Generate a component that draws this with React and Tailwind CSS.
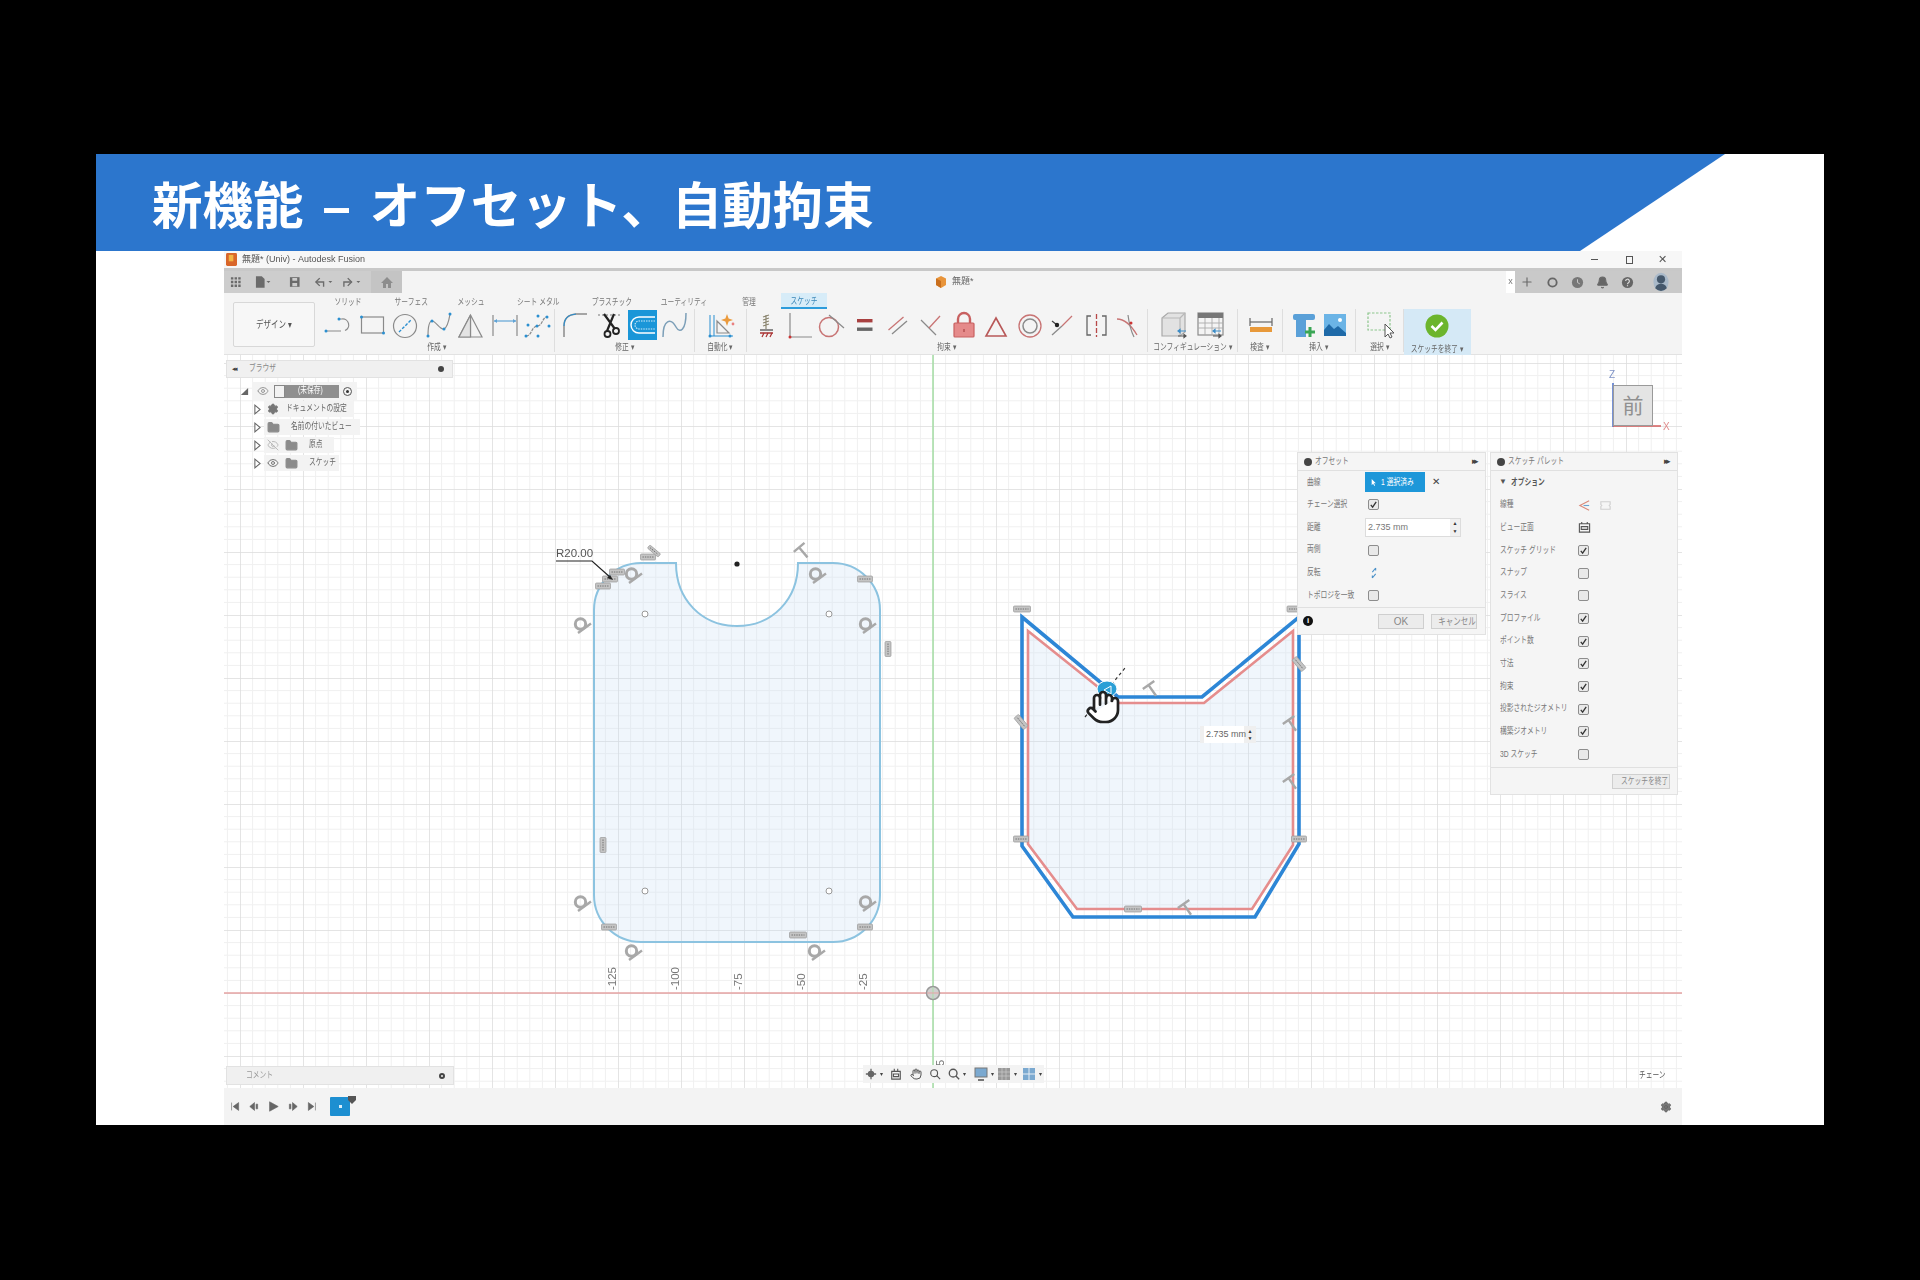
import React from 'react';
import { Hand, Plus, Bell, Settings, Eye, EyeOff, Folder } from 'lucide-react';

const BL = '#2b8fd0';
const GR = '#8a8a8a';
const RD = '#c87474';

function Txt({ children, className = '', origin = 'origin-left' }) {
  return <span className={`inline-block whitespace-nowrap scale-x-75 ${origin} ${className}`}>{children}</span>;
}

function Ico({ children }) {
  return <svg viewBox="0 0 33 32" fill="none" strokeWidth="1.2" className="w-[33px] h-8 shrink-0">{children}</svg>;
}

const Dot = ({ x, y, r = 1.5, c = BL }) => <circle cx={x} cy={y} r={r} fill={c} />;

const createIcons = [
  <Ico key="a"><path d="M4 22H19M17 10h3a6 6 0 0 1 3 11.5" stroke={GR} /><Dot x={4} y={22} /><Dot x={17} y={10} /></Ico>,
  <Ico key="b"><rect x="6.5" y="8" width="22" height="16" stroke={GR} /><Dot x={6.5} y={8} /><Dot x={28.5} y={24} /></Ico>,
  <Ico key="c"><circle cx="17" cy="17" r="11.5" stroke={GR} /><path d="M11 23 23 11" stroke={BL} strokeDasharray="3 1.5" strokeWidth="1.4" /></Ico>,
  <Ico key="d"><path d="M7 27C7 18 8 12 11 12c4 0 8 9 12 8 4-2 5-9 6-15" stroke={GR} /><Dot x={7} y={27} /><Dot x={11} y={12} /><Dot x={23} y={20} /><Dot x={29} y={5} /></Ico>,
  <Ico key="e"><path d="M16.5 6 5 28h23ZM16.5 6v22" stroke={GR} /><path d="M16.5 6 5 28h11.5Z" fill="#e3e3e3" stroke={GR} /></Ico>,
  <Ico key="f"><path d="M6 6v21M30 6v21" stroke={GR} /><path d="M7 12h22" stroke="#5fa3d6" /><path d="M7 12l3-2v4ZM29 12l-3-2v4Z" fill="#5fa3d6" /></Ico>,
  <Ico key="g"><path d="M6 27c6 0 5-9 11-10 6 0 5-9 10-9" stroke={GR} strokeDasharray="3 1" /><Dot x={6} y={27} /><Dot x={27} y={8} /><Dot x={8} y={16} /><Dot x={18} y={7} /><Dot x={29} y={17} /><Dot x={18} y={27} /><Dot x={17} y={17} /></Ico>,
];

const modifyIcons = [
  <Ico key="a"><path d="M5 28V17Q5 6 17 5h11" stroke={GR} strokeWidth="1.5" /><path d="M5 17Q5 6 17 5" stroke={BL} strokeWidth="1.1" /></Ico>,
  <Ico key="b"><path d="M6 6h22" stroke="#777" strokeDasharray="2 2" /><path d="M12 5 23 20M22 5 15 22" stroke="#222" strokeWidth="2.2" /><circle cx="15.5" cy="25" r="3" stroke="#222" strokeWidth="1.8" /><circle cx="24" cy="22" r="3" stroke="#222" strokeWidth="1.8" /></Ico>,
  <Ico key="c"><rect x="3" y="1" width="29" height="30" fill="#1a96d8" /><path d="M30 8H14a8 8 0 0 0 0 16h16" stroke="#fff" strokeWidth="1.4" /><path d="M30 12H14a4 4 0 0 0 0 8h16" stroke="#cfe9f8" strokeDasharray="1.5 1" /></Ico>,
  <Ico key="d"><path d="M5 28C5 10 13 9 18 18c4 7 10 3 10-14" stroke="#7c9fb8" strokeWidth="1.5" /></Ico>,
];

const autoIcon = (
  <Ico key="a">
    <path d="M6 6v21M10 6v21M6 27h23" stroke={BL} strokeWidth="1" />
    <path d="M13 24V12l12 12Z" stroke={GR} />
    <Dot x={6} y={27} /><Dot x={26} y={27} />
    <path d="M23 5l1.6 4.4L29 11l-4.4 1.6L23 17l-1.6-4.4L17 11l4.4-1.6Z" fill="#eb9a3c" />
    <Dot x={29} y={15} r={1.4} c="#e98080" />
  </Ico>
);

const constraintIcons = [
  <Ico key="a"><path d="M17 6v14M14 8l6-2M14 11l6-2M14 14l6-2M14 17l6-2" stroke="#8b8670" /><path d="M11 21h13" stroke="#666" strokeWidth="1.5" /><path d="M11 24h13" stroke="#a33" strokeWidth="1.5" /><path d="M13 28l2-4M17 28l2-4M21 28l2-4" stroke="#a33" /></Ico>,
  <Ico key="b"><path d="M8 4v24h22" stroke={GR} /><Dot x={8} y={28} c="#c33" /></Ico>,
  <Ico key="c"><circle cx="14" cy="18" r="9.5" stroke={RD} strokeWidth="1.5" /><path d="M14 6l15 13" stroke={GR} /></Ico>,
  <Ico key="d"><rect x="9" y="10" width="15.5" height="3.4" fill="#a84040" /><rect x="9" y="18.5" width="15.5" height="3.4" fill="#666" /></Ico>,
  <Ico key="e"><path d="M7.5 21 22.5 8" stroke={RD} strokeWidth="1.3" /><path d="M11 25 26 12" stroke={GR} strokeWidth="1.3" /></Ico>,
  <Ico key="f"><path d="M7 11l15 15" stroke={GR} strokeWidth="1.3" /><path d="M15 19 26 7" stroke={RD} strokeWidth="1.3" /></Ico>,
  <Ico key="g"><path d="M11 14V10a6 6 0 0 1 12 0v4" stroke="#c86060" strokeWidth="2.4" /><rect x="7" y="14" width="20" height="14" rx="1" fill="#e58a8a" stroke="#c86060" /><rect x="16.4" y="20" width="1.2" height="3" fill="#a44" /></Ico>,
  <Ico key="h"><path d="M16 9 26 27H6Z" stroke="#b85858" strokeWidth="1.6" /></Ico>,
  <Ico key="i"><circle cx="17" cy="17" r="11" stroke={RD} strokeWidth="1.3" /><circle cx="17" cy="17" r="7" stroke={GR} strokeWidth="1.5" /></Ico>,
  <Ico key="j"><path d="M6 26 16 17" stroke={GR} strokeWidth="1.3" /><path d="M16 17 26 7" stroke={RD} strokeWidth="1.3" /><path d="M6 12l5 4" stroke="#444" /><Dot x={11} y={16} r={2.2} c="#222" /></Ico>,
  <Ico key="k"><path d="M12 7H8v19h4M23 7h4v19h-4" stroke="#666" strokeWidth="1.3" /><path d="M17.5 5v23" stroke="#b84848" strokeWidth="1.3" strokeDasharray="5 2" /></Ico>,
  <Ico key="l"><path d="M5 10c8 0 14 6 20 16" stroke={RD} strokeWidth="1.3" /><path d="M16 6c1 8 3 16 6 22" stroke={GR} /><Dot x={19} y={14} c="#c33" /></Ico>,
];

const arrows = (
  <>
    <path d="M19 22h8M19 22l2-1.6v3.2Z" stroke="#3b8cc7" />
    <path d="M19 27h8M27 27l-2-1.6v3.2Z" stroke="#555" />
  </>
);

const Box = (
  <Ico key="a">
    <path d="M3 9l6-5h17v19l-5 4H3Z" fill="#e2e2e2" stroke="#a8a8a8" />
    <path d="M3 9h18v18M21 9l5-5" stroke="#b8b8b8" />
    {arrows}
  </Ico>
);
const Table = (
  <Ico key="b">
    <rect x="4" y="4" width="25" height="22" fill="#f4f4f4" stroke="#8a8a8a" />
    <rect x="4" y="4" width="25" height="5" fill="#777" />
    <path d="M4 14h25M4 19h25M11 9v17M18 9v17M25 9v17" stroke="#aaa" strokeWidth=".9" />
    {arrows}
  </Ico>
);
const Ruler = (
  <Ico key="a">
    <path d="M6 9v8M28 9v8" stroke="#666" /><path d="M6 13h22" stroke="#666" />
    <rect x="6" y="18" width="22" height="5" fill="#e8993a" />
  </Ico>
);
const Bolt = (
  <Ico key="a">
    <rect x="7" y="5" width="22" height="6" rx="2" fill="#5aa0d8" />
    <rect x="10" y="11" width="10" height="17" fill="#5aa0d8" />
    <path d="M24 18v10M19 23h10" stroke="#3aa655" strokeWidth="3" />
  </Ico>
);
const Img = (
  <Ico key="b">
    <rect x="5" y="5" width="22" height="22" fill="#6bb4e6" />
    <circle cx="21" cy="11" r="2" fill="#fff" />
    <path d="M5 27v-6l5-6 5 5 4-3 8 7v3Z" fill="#1f6aa8" />
  </Ico>
);
const Sel = (
  <Ico key="a">
    <rect x="5" y="4" width="22" height="17" stroke="#8cc58c" strokeDasharray="2.5 1.5" />
    <path d="M22 15v13l3-3 2 4 2-1-2-4h4Z" fill="#fff" stroke="#555" strokeWidth="1" />
  </Ico>
);
const Finish = (
  <Ico key="a">
    <circle cx="16" cy="17" r="11.5" fill="#6cb52d" />
    <path d="M10.5 17l4 4 7-7.5" stroke="#fff" strokeWidth="2.6" />
  </Ico>
);

function Group({ w, label, icons, active, gap = '' }) {
  return (
    <div className={`flex flex-col items-center ${w} ${active ? 'bg-[#d5e9f6]' : 'border-r border-[#dedede] mb-[3px]'}`}>
      <div className={`flex h-8 justify-center ${gap}`}>{icons}</div>
      <div className="h-[14px] pt-[2px] flex items-center justify-center text-[9px] leading-none text-[#666]">
        <Txt origin="origin-center">{label} ▾</Txt>
      </div>
    </div>
  );
}

const tabs = [
  ['ソリッド', 'w-[56px]'],
  ['サーフェス', 'w-[70px]'],
  ['メッシュ', 'w-[50px]'],
  ['シート メタル', 'w-[84px]'],
  ['プラスチック', 'w-[64px]'],
  ['ユーティリティ', 'w-[80px]'],
  ['管理', 'w-[50px]'],
];

function Ribbon() {
  return (
    <div className="h-[62px] bg-[#f4f4f4] flex border-b border-[#e2e2e2]">
      <div className="w-[96px] pl-[9px] pt-[9px]">
        <div className="w-[82px] h-[45px] border border-[#d8d8d8] rounded-[2px] bg-[#f7f7f7] flex items-center justify-center text-[10px] text-[#555]">
          <Txt origin="origin-center">デザイン ▾</Txt>
        </div>
      </div>
      <div className="flex flex-col">
        <div className="h-4 flex items-center text-[9px] text-[#777]">
          {tabs.map(([t, w]) => (
            <div key={t} className={`${w} text-center pt-[3px]`}><Txt origin="origin-center">{t}</Txt></div>
          ))}
          <div className="ml-[7px] w-[46px] h-4 pt-[2px] leading-[12px] bg-[#d7ecf8] border-b-2 border-[#2d9cdb] text-center text-[#3a87b8]"><Txt origin="origin-center">スケッチ</Txt></div>
        </div>
        <div className="flex h-[46px]">
          <Group w="w-[235px]" label="作成" icons={createIcons} />
          <Group w="w-[140px]" label="修正" icons={modifyIcons} />
          <Group w="w-[52px]" label="自動化" icons={autoIcon} />
          <Group w="w-[401px]" label="拘束" icons={constraintIcons} />
          <Group w="w-[90px]" label="コンフィギュレーション" icons={[Box, Table]} gap="gap-[2px]" />
          <Group w="w-[45px]" label="検査" icons={Ruler} />
          <Group w="w-[73px]" label="挿入" icons={[Bolt, Img]} />
          <Group w="w-[48px]" label="選択" icons={Sel} />
          <Group w="w-[67px]" label="スケッチを終了" icons={Finish} active />
        </div>
      </div>
    </div>
  );
}

function SmallSvg({ w = 14, children }) {
  return <svg viewBox={`0 0 ${w} 14`} width={w} height="14" fill="#6b6b6b">{children}</svg>;
}

function TitleBars() {
  return (
    <>
      <div className="h-[17px] bg-[#f7f7f7] flex items-center text-[9px] text-[#555]">
        <svg viewBox="0 0 12 14" className="w-[11px] h-[13px] ml-[2px]"><rect width="12" height="14" rx="1.5" fill="#d9662a" /><path d="M3 2h5v7H3Z" fill="#f2b544" /></svg>
        <span className="ml-[5px] whitespace-nowrap">無題* (Univ) - Autodesk Fusion</span>
        <div className="ml-auto flex items-center text-[#555]">
          <span className="w-[7px] h-px bg-[#555]" />
          <span className="ml-[28px] w-[7px] h-[8px] border border-[#555]" />
          <span className="ml-[25px] mr-[15px] text-[11px] leading-none">✕</span>
        </div>
      </div>
      <div className="h-[3px] bg-[#c8c8c8]" />
      <div className="h-[22px] bg-[#f4f4f4] flex items-center relative">
        <div className="w-[178px] h-full bg-[#cdcdcd] flex items-center pl-[5px] gap-[5px]">
          <SmallSvg><path d="M2 2h2.5v2.5H2ZM5.8 2h2.5v2.5H5.8ZM9.6 2h2.5v2.5H9.6ZM2 5.8h2.5v2.5H2ZM5.8 5.8h2.5v2.5H5.8ZM9.6 5.8h2.5v2.5H9.6ZM2 9.6h2.5v2.5H2ZM5.8 9.6h2.5v2.5H5.8ZM9.6 9.6h2.5v2.5H9.6Z" /></SmallSvg>
          <span className="w-[2px]" />
          <SmallSvg w={18}><path d="M2 1h6l3 3v9H2Z" /><path d="M13 6h4l-2 2Z" /></SmallSvg>
          <span className="w-[6px]" />
          <SmallSvg><path d="M2 2h10v10H2Z" /><path d="M4.5 2.8h5v3h-5ZM4.5 8h5v3.4h-5Z" fill="#cdcdcd" /></SmallSvg>
          <span className="w-[2px]" />
          <SmallSvg w={24}><path d="M7 3 3 7l4 4" fill="none" stroke="#6b6b6b" strokeWidth="1.4" /><path d="M3 7h8v5" fill="none" stroke="#6b6b6b" strokeWidth="1.4" /><path d="M16 6h4l-2 2Z" /></SmallSvg>
          <SmallSvg w={24}><path d="M7 3l4 4-4 4" fill="none" stroke="#6b6b6b" strokeWidth="1.4" /><path d="M11 7H3v5" fill="none" stroke="#6b6b6b" strokeWidth="1.4" /><path d="M16 6h4l-2 2Z" /></SmallSvg>
          <div className="h-full w-8 ml-[2px] bg-[#c4c4c4] flex items-center justify-center">
            <svg viewBox="0 0 14 14" width="14" height="14" fill="#8d8d8d"><path d="M7 2 1 8h2v5h3V9h2v4h3V8h2Z" /></svg>
          </div>
        </div>
        <div className="ml-[533px] flex items-center gap-[5px] text-[9px] text-[#666]">
          <svg viewBox="0 0 12 12" width="12" height="12"><path d="M6 0l5 2.5V9L6 12 1 9V2.5Z" fill="#e8943a" /><path d="M6 5v7L1 9V2.5Z" fill="#c96f1e" /></svg>
          <span>無題*</span>
        </div>
        <div className="ml-auto flex h-full items-center">
          <div className="w-[9px] h-full bg-white text-[9px] text-[#777] flex items-center justify-center">x</div>
          <div className="w-[167px] h-full bg-[#c9c9c9] flex items-center text-[#6b6b6b]">
            <Plus className="w-[14px] h-[14px] ml-[5px]" strokeWidth={2} />
            <svg viewBox="0 0 14 14" className="w-[13px] h-[13px] ml-[12px]" fill="none" stroke="#666" strokeWidth="2"><circle cx="7" cy="7" r="4.5" /></svg>
            <svg viewBox="0 0 14 14" className="w-[13px] h-[13px] ml-[12px]"><circle cx="7" cy="7" r="6" fill="#777" /><path d="M7 3.5V7l2.5 1.5" stroke="#ccc" fill="none" /></svg>
            <Bell className="w-[13px] h-[13px] ml-[12px]" fill="#666" />
            <svg viewBox="0 0 14 14" className="w-[13px] h-[13px] ml-[12px]"><circle cx="7" cy="7" r="6" fill="#666" /><path d="M5 5.5a2 2 0 1 1 3 1.7c-.8.5-1 .8-1 1.6M7 10v1" stroke="#ddd" fill="none" strokeWidth="1.3" /></svg>
            <svg viewBox="0 0 18 22" className="w-[16px] h-[20px] ml-[19px]"><ellipse cx="9" cy="11" rx="8.5" ry="10.5" fill="#a9b9c9" /><circle cx="9" cy="8" r="4.6" fill="#45586c" /><path d="M2.5 18c1-4 4-5 6.5-5s5.5 1 6.5 5q-3 3-6.5 3t-6.5-3Z" fill="#45586c" /></svg>
          </div>
        </div>
      </div>
    </>
  );
}

function Tangent({ x, y }) {
  return (
    <g transform={`translate(${x} ${y})`} fill="none" stroke="#a8a8a8">
      <circle cx="-1.5" cy="-1" r="5.2" strokeWidth="3" />
      <path d="M-4 8 9 -1.5" strokeWidth="2.4" />
    </g>
  );
}

function Bar({ x, y, rot = 0, w = 15, h = 6 }) {
  return (
    <g transform={`translate(${x} ${y}) rotate(${rot})`}>
      <rect x={-w / 2} y={-h / 2} width={w} height={h} rx="1" fill="#c4c4c4" stroke="#9a9a9a" strokeWidth=".7" />
      <path d={`M${-w / 2 + 2} 0H${w / 2 - 2}`} stroke="#666" strokeWidth=".9" strokeDasharray="1.4 1" />
    </g>
  );
}

function Tee({ x, y, rot = -35 }) {
  return (
    <g transform={`translate(${x} ${y}) rotate(${rot})`} stroke="#a8a8a8" strokeWidth="2.4" fill="none">
      <path d="M-7 -6H7M0 -6V7" />
    </g>
  );
}

function Drawing() {
  const axis = [
    ['-125', 612, 990], ['-100', 675, 990], ['-75', 738, 990], ['-50', 801, 990], ['-25', 863, 990],
  ];
  return (
    <svg viewBox="224 355 1458 733" className="absolute inset-0 w-full h-full" fill="none">
      <defs>
        <pattern id="grid" patternUnits="userSpaceOnUse" x="933" y="993" width="63" height="63">
          <path d="M12.6 0V63M25.2 0V63M37.8 0V63M50.4 0V63M0 12.6H63M0 25.2H63M0 37.8H63M0 50.4H63" stroke="#f0f0f0" strokeWidth="1" />
          <path d="M0 0V63M0 0H63" stroke="#dcdcdc" strokeWidth="1.5" />
        </pattern>
      </defs>
      <rect x="224" y="355" width="1458" height="733" fill="url(#grid)" />
      <path d="M224 993H1682" stroke="#e6a3a3" strokeWidth="1.6" />
      <path d="M933 355V1088" stroke="#a9dfa9" strokeWidth="1.6" />
      <circle cx="933" cy="993" r="6.5" fill="#d0d0d0" stroke="#999" strokeWidth="1.5" />
      <path d="M933 987v12" stroke="#a9dfa9" /><path d="M927 993h12" stroke="#e6a3a3" />

      {/* left sketch */}
      <path
        d="M594 610A47 47 0 0 1 641 563H676C676 600 702 626 737 626C772 626 798 600 798 563H833A47 47 0 0 1 880 610V895A47 47 0 0 1 833 942H641A47 47 0 0 1 594 895Z"
        fill="#c9dff3" fillOpacity=".28" stroke="#8cc3e0" strokeWidth="2"
      />
      {[[645, 614], [829, 614], [645, 891], [829, 891]].map(([x, y]) => (
        <circle key={`${x}-${y}`} cx={x} cy={y} r="3" fill="#fff" stroke="#999" strokeWidth="1" />
      ))}
      <circle cx="737" cy="564" r="2.6" fill="#222" />
      {[[582, 625], [633, 575], [817, 575], [867, 625], [582, 903], [633, 952], [816, 952], [867, 903]].map(([x, y]) => (
        <Tangent key={`${x}-${y}`} x={x} y={y} />
      ))}
      <Bar x={617} y={572} /><Bar x={610} y={579} /><Bar x={603} y={586} /><Bar x={865} y={579} />
      <Bar x={648} y={557} /><Bar x={654} y={551} rot={40} w={14} h={4} />
      <Tee x={803} y={552} rot={-40} />
      <Bar x={888} y={649} rot={90} /><Bar x={603} y={845} rot={90} />
      <Bar x={609} y={927} /><Bar x={798} y={935} w={17} /><Bar x={865} y={927} />
      <path d="M556 561H592L611 578" stroke="#222" strokeWidth="1.2" />
      <path d="M613 580l-6-2 3-3Z" fill="#222" />
      <text x="556" y="557" fontSize="11.5" fill="#555" fontFamily="Liberation Sans">R20.00</text>
      {axis.map(([t, x, y]) => (
        <text key={t} transform={`translate(${x + 4} ${y}) rotate(-90)`} fontSize="11.5" fill="#777" fontFamily="Liberation Sans">{t}</text>
      ))}
      <text transform="translate(944 1066) rotate(-90)" fontSize="11" fill="#777" fontFamily="Liberation Sans">5</text>

      {/* right sketch */}
      <path d="M1028 631 1118 703H1204L1293 631V845L1252 909H1077L1028 844Z" fill="#c9dff3" fillOpacity=".28" stroke="#e58d8d" strokeWidth="2.6" />
      <path d="M1022 617 1118 697H1202L1299 617V844L1255 917H1073L1022 846Z" stroke="#2d86d6" strokeWidth="3.6" />
      <Bar x={1022} y={609} w={17} /><Bar x={1293} y={609} w={12} />
      <Bar x={1021} y={722} rot={50} /><Bar x={1299} y={664} rot={50} />
      <Tee x={1152} y={690} /><Tee x={1292} y={725} /><Tee x={1292} y={783} /><Tee x={1187} y={909} />
      <Bar x={1021} y={839} /><Bar x={1299} y={839} /><Bar x={1133} y={909} w={17} />
      <path d="M1085 717 1125 668" stroke="#333" strokeWidth="1.2" strokeDasharray="3 3" />
      <ellipse cx="1107" cy="689" rx="10" ry="8" fill="#2b9fd6" stroke="#fff" />
      <path d="M1104 690 1111 686V694Z" stroke="#fff" />
      <Hand x={1085} y={689} width={36} height={36} fill="#fff" stroke="#222" strokeWidth={1.8} />

      {/* view cube */}
      <path d="M1613 383V427" stroke="#5577cc" strokeWidth="1.6" />
      <path d="M1613 426H1661" stroke="#d45c5c" strokeWidth="1.6" />
      <text x="1609" y="378" fontSize="10" fill="#7f93c6" fontFamily="Liberation Sans">Z</text>
      <text x="1663" y="430" fontSize="10" fill="#e08c8c" fontFamily="Liberation Sans">X</text>
    </svg>
  );
}

function Check({ on }) {
  return (
    <span className="w-[11px] h-[11px] rounded-[2px] border border-[#8d8d8d] bg-[#e9e9e9] flex items-center justify-center shrink-0">
      {on && <svg viewBox="0 0 10 10" className="w-[9px] h-[9px]" fill="none" stroke="#333" strokeWidth="1.4"><path d="M2 5.5 4 8l4-6" /></svg>}
    </span>
  );
}

function PanelHead({ title }) {
  return (
    <div className="h-[18px] flex items-center border-b border-[#e0e0e0] text-[9px] text-[#777] px-[6px]">
      <span className="w-2 h-2 rounded-full bg-[#444] mr-[3px]" />
      <Txt>{title}</Txt>
      <span className="ml-auto text-[9px] text-[#444] tracking-[-3px] pr-[3px]">▸▸</span>
    </div>
  );
}

function OffsetRow({ label, children }) {
  return (
    <div className="h-[22.6px] flex items-center pl-[9px]">
      <div className="w-[58px] text-[9px] text-[#777]"><Txt>{label}</Txt></div>
      {children}
    </div>
  );
}

function OffsetPanel() {
  return (
    <div className="absolute left-[1073px] top-[97px] w-[189px] h-[183px] bg-[#f5f5f5] border border-[#e2e2e2] flex flex-col">
      <PanelHead title="オフセット" />
      <div>
        <OffsetRow label="曲線">
          <div className="w-[60px] h-5 bg-[#1d97d9] flex items-center pl-[6px] gap-[5px] text-[9px] text-white">
            <svg viewBox="0 0 8 10" className="w-[7px] h-[9px]"><path d="M1 0v9l2-2 2 3 1-1-2-3h3Z" fill="#fff" /></svg>
            <Txt>1 選択済み</Txt>
          </div>
          <span className="ml-[7px] text-[10px] leading-none text-[#444]">✕</span>
        </OffsetRow>
        <OffsetRow label="チェーン選択"><span className="ml-[3px]"><Check on /></span></OffsetRow>
        <OffsetRow label="距離">
          <div className="w-[96px] h-[19px] bg-white border border-[#dcdcdc] flex items-center text-[9px] text-[#777]">
            <span className="pl-[2px] flex-1">2.735 mm</span>
            <span className="w-[10px] h-full bg-[#f0f0f0] text-[5px] leading-[8px] text-[#333] text-center flex flex-col justify-center"><span>▲</span><span>▼</span></span>
          </div>
        </OffsetRow>
        <OffsetRow label="両側"><span className="ml-[3px]"><Check /></span></OffsetRow>
        <OffsetRow label="反転">
          <svg viewBox="0 0 12 14" className="ml-[4px] w-[10px] h-3" fill="none" stroke="#4a90c8" strokeWidth="1.3"><path d="M8 1 4 6M8 8l-4 5M8 1v3M4 13v-3" /></svg>
        </OffsetRow>
        <OffsetRow label="トポロジを一致"><span className="ml-[3px]"><Check /></span></OffsetRow>
      </div>
      <div className="mt-auto h-[27px] border-t border-[#e0e0e0] flex items-center pl-[5px] pr-[8px] text-[10px] text-[#888]">
        <span className="w-[10px] h-[10px] rounded-full bg-[#111] text-white text-[8px] leading-[10px] text-center font-bold">i</span>
        <div className="ml-auto w-[46px] h-[15px] border border-[#cfcfcf] bg-[#ececec] text-center leading-[13px]">OK</div>
        <div className="ml-[7px] w-[46px] h-[15px] border border-[#cfcfcf] bg-[#ececec] text-center leading-[13px]"><Txt origin="origin-center">キャンセル</Txt></div>
      </div>
    </div>
  );
}

const paletteRows = [
  ['スケッチ グリッド', true],
  ['スナップ', false],
  ['スライス', false],
  ['プロファイル', true],
  ['ポイント数', true],
  ['寸法', true],
  ['拘束', true],
  ['投影されたジオメトリ', true],
  ['構築ジオメトリ', true],
  ['3D スケッチ', false],
];

function PaletteRow({ label, children }) {
  return (
    <div className="h-[22.7px] flex items-center pl-[9px]">
      <div className="w-[78px] text-[9px] text-[#777]"><Txt>{label}</Txt></div>
      {children}
    </div>
  );
}

function Palette() {
  return (
    <div className="absolute left-[1266px] top-[97px] w-[188px] h-[343px] bg-[#f5f5f5] border border-[#e2e2e2] flex flex-col">
      <PanelHead title="スケッチ パレット" />
      <div>
        <div className="h-[22.7px] flex items-center pl-[8px] text-[9px] text-[#555] font-bold">
          <span className="text-[8px] mr-[4px]">▼</span><Txt>オプション</Txt>
        </div>
        <PaletteRow label="線種">
          <svg viewBox="0 0 14 14" className="w-[13px] h-[13px]" fill="none" stroke="#d98a7a" strokeWidth="1.2"><path d="M12 2 2 7l10 5" /><path d="M6 7h6" stroke="#6aa5d0" /></svg>
          <svg viewBox="0 0 14 14" className="w-[13px] h-[13px] ml-[8px]" fill="none" stroke="#cfcfcf" strokeWidth="1.2"><path d="M2 3h10v3l-1 1 1 1v3H2V8l1-1-1-1Z" /></svg>
        </PaletteRow>
        <PaletteRow label="ビュー正面">
          <svg viewBox="0 0 14 14" className="w-[13px] h-[13px]" fill="none" stroke="#555" strokeWidth="1.2"><path d="M1.5 3h11v9h-11ZM4 3V1M10 3V1M3.5 6h7v3h-7Z" /></svg>
        </PaletteRow>
        {paletteRows.map(([t, on]) => (
          <PaletteRow key={t} label={t}><Check on={on} /></PaletteRow>
        ))}
      </div>
      <div className="mt-auto h-[27px] border-t border-[#e0e0e0] flex items-center justify-end pr-[7px]">
        <div className="w-[58px] h-[15px] border border-[#cfcfcf] bg-[#ececec] text-center text-[9px] leading-[13px] text-[#888]"><Txt origin="origin-center">スケッチを終了</Txt></div>
      </div>
    </div>
  );
}

function BrowserTree() {
  const tri = <svg viewBox="0 0 8 12" className="w-[7px] h-[11px] shrink-0" fill="#fff" stroke="#666" strokeWidth="1.2"><path d="M1 1 7 6 1 11Z" /></svg>;
  const folder = <Folder className="w-[13px] h-[13px] shrink-0" fill="#8b8b8b" stroke="#8b8b8b" />;
  return (
    <div className="absolute left-[16px] top-[27px] text-[9px] text-[#666] flex flex-col">
      <div className="h-[18px] flex items-center">
        <svg viewBox="0 0 10 10" className="w-[9px] h-[9px]"><path d="M9 1v8H1Z" fill="#666" /></svg>
        <div className="ml-[3px] h-[18px] w-[105px] bg-[#f3f3f3] flex items-center pl-[5px]">
          <Eye className="w-3 h-3" stroke="#999" />
          <div className="ml-[5px] h-[13px] w-[65px] bg-[#8f8f8f] flex items-center text-white">
            <span className="w-[11px] h-full bg-[#f2f2f2] border border-[#888]" />
            <span className="ml-[13px]"><Txt>(未保存)</Txt></span>
          </div>
          <span className="ml-[4px] w-[9px] h-[9px] rounded-full border border-[#555] flex items-center justify-center"><span className="w-[3px] h-[3px] rounded-full bg-[#333]" /></span>
        </div>
      </div>
      <div className="h-[18px] flex items-center pl-[14px]">{tri}
        <div className="ml-[3px] h-[16px] w-[90px] bg-[#f3f3f3] flex items-center pl-[3px] gap-[7px]">
          <Settings className="w-3 h-3 shrink-0" fill="#777" stroke="#777" /><Txt>ドキュメントの設定</Txt>
        </div>
      </div>
      <div className="h-[18px] flex items-center pl-[14px]">{tri}
        <div className="ml-[3px] h-[16px] w-[96px] bg-[#f3f3f3] flex items-center pl-[3px] gap-[11px]">
          {folder}<Txt>名前の付いたビュー</Txt>
        </div>
      </div>
      <div className="h-[18px] flex items-center pl-[14px]">{tri}
        <div className="ml-[3px] h-[16px] w-[70px] bg-[#f3f3f3] flex items-center pl-[3px] gap-[6px]">
          <EyeOff className="w-3 h-3 shrink-0" stroke="#bbb" />{folder}<span className="ml-[5px]"><Txt>原点</Txt></span>
        </div>
      </div>
      <div className="h-[18px] flex items-center pl-[14px]">{tri}
        <div className="ml-[3px] h-[16px] w-[75px] bg-[#f3f3f3] flex items-center pl-[3px] gap-[6px]">
          <Eye className="w-3 h-3 shrink-0" stroke="#777" />{folder}<span className="ml-[5px]"><Txt>スケッチ</Txt></span>
        </div>
      </div>
    </div>
  );
}

function NavBar() {
  const caret = <span className="text-[6px] text-[#444] leading-none">▾</span>;
  return (
    <div className="absolute left-[639px] bottom-[5px] w-[181px] h-[18px] bg-[#f3f3f3] flex items-center pl-[2px] gap-[3px]">
      <svg viewBox="0 0 14 14" className="w-3 h-3" fill="none" stroke="#666" strokeWidth="1.5"><circle cx="7" cy="7" r="3" fill="#666" /><path d="M7 1v12M1 7h12" /></svg>{caret}
      <svg viewBox="0 0 14 14" className="w-3 h-3 ml-[4px]" fill="none" stroke="#555" strokeWidth="1.3"><path d="M2 4h10v9H2ZM5 4V1M9 4V1M4 7h6v3H4Z" /></svg>
      <Hand className="w-3 h-3 ml-[5px]" stroke="#555" />
      <svg viewBox="0 0 14 14" className="w-3 h-3 ml-[4px]" fill="none" stroke="#555" strokeWidth="1.3"><circle cx="6" cy="6" r="4" /><path d="M9 9l4 4" /></svg>
      <svg viewBox="0 0 14 14" className="w-3 h-3 ml-[4px]" fill="none" stroke="#555" strokeWidth="1.6"><circle cx="6" cy="6" r="4.5" /><path d="M9 9l4 4" /></svg>{caret}
      <svg viewBox="0 0 14 14" className="w-[14px] h-[14px] ml-[5px]"><rect x="1" y="1" width="12" height="9" fill="#7ba9d0" stroke="#777" /><path d="M4 13h6" stroke="#777" strokeWidth="2" /></svg>{caret}
      <svg viewBox="0 0 14 14" className="w-[14px] h-[14px]" fill="#999"><path d="M1 1h12v12H1Z" /><path d="M1 5h12M1 9h12M5 1v12M9 1v12" stroke="#ccc" strokeWidth=".7" /></svg>{caret}
      <svg viewBox="0 0 14 14" className="w-[14px] h-[14px] ml-[2px]"><rect x="1" y="1" width="12" height="12" fill="#7ba9d0" /><path d="M7 1v12M1 7h12" stroke="#e8eef5" /></svg>{caret}
    </div>
  );
}

function Timeline() {
  return (
    <div className="h-[37px] bg-[#f3f3f3] flex items-center pl-[6px] relative">
      {['M2 2v10M11 2 4 7l7 5Z', 'M7 2 1 7l6 5ZM9 4h2v6H9Z', 'M2 1l11 6-11 6Z', 'M7 2l6 5-6 5ZM3 4h2v6H3Z', 'M3 2l7 5-7 5ZM12 2v10'].map((d, i) => (
        <svg key={d} viewBox="0 0 14 14" className={`w-[11px] h-[11px] ${i ? 'ml-[8px]' : ''}`} fill="#666" stroke="#666" strokeWidth=".8"><path d={d} /></svg>
      ))}
      <div className="ml-[13px] w-[20px] h-[19px] bg-[#1d8fd1] rounded-[1px] flex items-center justify-center">
        <span className="w-[3px] h-[3px] bg-[#dbeefa]" />
      </div>
      <svg viewBox="0 0 8 8" className="absolute left-[124px] top-[8px] w-2 h-2"><path d="M0 0h8v4L4 8 0 4Z" fill="#555" /></svg>
      <Settings className="ml-auto mr-[10px] w-3 h-3" stroke="#666" fill="#777" />
    </div>
  );
}

function Canvas() {
  return (
    <div className="relative flex-1 bg-white overflow-hidden">
      <Drawing />
      <div className="absolute left-[2px] top-[5px] w-[227px] h-[18px] bg-[#f0f0f0] border border-[#e2e2e2] flex items-center text-[9px] text-[#888]">
        <span className="ml-[5px] w-[17px] text-[7px] tracking-[-2px] text-[#444]">◂◂</span>
        <Txt>ブラウザ</Txt>
        <span className="ml-auto mr-[8px] w-[6px] h-[6px] rounded-full bg-[#444]" />
      </div>
      <BrowserTree />
      <div className="absolute left-[1389px] top-[30px] w-10 h-[41px] bg-[#e4e4e4] border border-[#9a9a9a] flex items-center justify-center text-[21px] text-[#909090]">前</div>
      <OffsetPanel />
      <Palette />
      <div className="absolute left-[976px] top-[371px] w-[56px] h-[17px] bg-[#efefef] flex items-center pl-[4px] text-[9px] text-[#666]">
        <span className="bg-white w-[40px] h-full pl-[2px] leading-[17px] whitespace-nowrap">2.735 mm</span>
        <span className="w-[12px] text-[5px] leading-[7px] text-center text-[#333]">▲<br />▼</span>
      </div>
      <div className="absolute left-[2px] bottom-[3px] w-[228px] h-[19px] bg-[#f0f0f0] border border-[#e2e2e2] flex items-center text-[9px] text-[#999]">
        <span className="ml-[19px]"><Txt>コメント</Txt></span>
        <span className="ml-auto mr-[8px] w-[6px] h-[6px] rounded-full border-2 border-[#444]" />
      </div>
      <NavBar />
      <div className="absolute right-[16px] bottom-[6px] text-[9px] text-[#555]"><Txt origin="origin-right">チェーン</Txt></div>
    </div>
  );
}

export default function App() {
  return (
    <div className="w-[1920px] h-[1280px] bg-black pt-[154px] pl-[96px] [font-family:'Liberation_Sans','Noto_Sans_CJK_JP',sans-serif]">
      <div className="w-[1728px] h-[971px] bg-white flex flex-col">
        <div className="h-[97px] bg-[#2c76cd] [clip-path:polygon(0_0,1629px_0,1484px_100%,0_100%)] flex items-center pl-[56px] blur-[0.4px]">
          <h1 className="text-[50.5px] leading-none font-bold text-white whitespace-nowrap mt-[9px] [word-spacing:5px]">新機能 – オフセット、自動拘束</h1>
        </div>
        <div className="ml-[128px] w-[1458px] flex-1 flex flex-col blur-[0.45px] min-h-0">
          <TitleBars />
          <Ribbon />
          <Canvas />
          <Timeline />
        </div>
      </div>
    </div>
  );
}
